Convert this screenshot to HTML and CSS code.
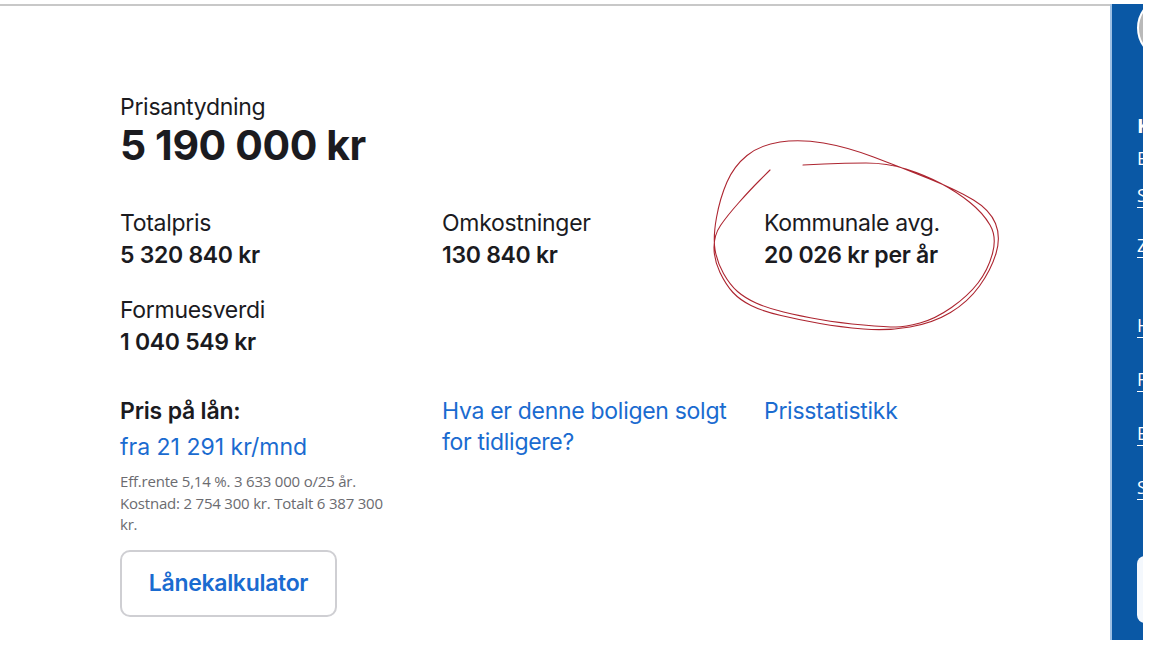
FILE: index.html
```html
<!DOCTYPE html>
<html lang="no">
<head>
  <meta charset="UTF-8" />
  <title>Prisantydning</title>
  <link rel="stylesheet" href="styles.css">
</head>
<body>
  <div class="page">
    <main class="main">
      <section class="price-box">
        <div class="price-label">Prisantydning</div>
        <div class="price-main">5 190 000 kr</div>

        <div class="facts">
          <div class="fact">
            <div class="fact-label">Totalpris</div>
            <div class="fact-value">5 320 840 kr</div>
          </div>
          <div class="fact">
            <div class="fact-label">Omkostninger</div>
            <div class="fact-value">130 840 kr</div>
          </div>
          <div class="fact marked">
            <div class="fact-label">Kommunale avg.</div>
            <div class="fact-value">20 026 kr per år</div>
            <!-- håndtegnet markering -->
            <svg class="scribble" viewBox="0 0 320 210" aria-hidden="true">
              <path d="M103 35 L124 34 Q145 33 166 33 Q187 33 206 39 Q225 45 241 53.5 Q257 62 270 72.5 Q283 83 290 95 Q297 107 292.5 123.5 Q288 140 278 153 Q268 166 251.5 177.5 Q235 189 220 193 Q205 197 196 197 Q187 197 163.5 195 Q140 193 120 189.5 Q100 186 83.5 182 Q67 178 56 173 Q45 168 37.5 161.5 Q30 155 23.5 143.5 Q17 132 15 119.5 Q13 107 16.5 87.5 Q20 68 27 52 Q34 36 47 25.5 Q60 15 80 12 Q100 9 123.5 13 Q147 17 173.5 27 Q200 37 228.5 48.5 Q257 60 273.5 70 Q290 80 295.5 93.5 Q301 107 296 123.5 Q291 140 279.5 156 Q268 172 250.5 182.5 Q233 193 210 197 Q187 201 163.5 199 Q140 197 120 193.5 Q100 190 81 185.5 Q62 181 51 175.5 Q40 170 33 162.5 Q26 155 20 142.5 Q14 130 14 117.5 Q14 105 20.5 95.5 Q27 86 38.5 73 Q50 60 60 50 L70 40" />
            </svg>
          </div>
          <div class="fact">
            <div class="fact-label">Formuesverdi</div>
            <div class="fact-value">1 040 549 kr</div>
          </div>
        </div>

        <div class="loan-row">
          <div class="loan">
            <div class="loan-title">Pris på lån:</div>
            <a class="link loan-amount" href="#">fra 21 291 kr/mnd</a>
            <p class="loan-note">Eff.rente 5,14 %. 3 633 000 o/25 år. Kostnad: 2 754 300 kr. Totalt 6 387 300 kr.</p>
            <button class="btn-outline" type="button">Lånekalkulator</button>
          </div>
          <div class="loan-link">
            <a class="link" href="#">Hva er denne boligen solgt for tidligere?</a>
          </div>
          <div class="loan-link">
            <a class="link" href="#">Prisstatistikk</a>
          </div>
        </div>
      </section>
    </main>

    <aside class="side">
      <div class="side-inner">
        <div class="avatar"></div>
        <div class="side-name">Kristine Megler</div>
        <div class="side-text">Eiendomsmegler</div>
        <a class="side-link first" href="#">Send e-post</a>
        <a class="side-link tight" href="#">Zoom-visning</a>
        <a class="side-link gap" href="#">Hjemmeside</a>
        <a class="side-link" href="#">Flere annonser</a>
        <a class="side-link" href="#">Bestill verdivurdering</a>
        <a class="side-link" href="#">Se salgsoppgave</a>
        <div class="side-card"></div>
      </div>
    </aside>
  </div>
</body>
</html>
```

FILE: styles.css
```css
body {
  margin: 0;
  background: #fff;
  font-family: Inter, "Noto Sans", sans-serif;
  color: #1b1b1f;
  overflow: hidden;
}

.page {
  display: flex;
  height: 648px;
}

.main {
  width: 1110px;
  margin-top: 4px;
  border-top: 2px solid #c8c8c8;
  box-sizing: border-box;
}

.price-box {
  padding: 86px 0 0 120px;
}

.price-label {
  font-size: 23px;
  line-height: 30px;
  letter-spacing: -0.3px;
}

.price-main {
  font-size: 41px;
  font-weight: 700;
  line-height: 46px;
  letter-spacing: -0.4px;
}

.facts {
  display: grid;
  grid-template-columns: repeat(3, 322px);
  row-gap: 24px;
  margin-top: 40px;
}

.fact-label {
  font-size: 23px;
  line-height: 31px;
  letter-spacing: -0.3px;
}

.fact-value {
  font-size: 23px;
  font-weight: 600;
  line-height: 32px;
  letter-spacing: -0.3px;
}

.marked {
  position: relative;
}

.scribble {
  position: absolute;
  left: -64px;
  top: -78px;
  width: 320px;
  height: 210px;
  fill: none;
  stroke: #ad2530;
  stroke-width: 1.1;
  stroke-linejoin: round;
  stroke-linecap: round;
  pointer-events: none;
}

.loan-row {
  display: grid;
  grid-template-columns: repeat(3, 322px);
  margin-top: 38px;
}

.loan-title {
  font-size: 23px;
  font-weight: 600;
  line-height: 30px;
  letter-spacing: -0.2px;
}

.link {
  color: #1a6bd0;
  text-decoration: none;
  font-size: 23px;
  line-height: 31px;
  letter-spacing: -0.3px;
}

.loan-amount {
  display: block;
  margin-top: 6px;
  letter-spacing: 0;
}

.loan-note {
  width: 278px;
  margin: 8px 0 0;
  font-size: 15px;
  line-height: 21.5px;
  color: #6b6b70;
  font-family: "Open Sans", sans-serif;
  letter-spacing: -0.2px;
}

.btn-outline {
  margin-top: 14px;
  width: 217px;
  height: 67px;
  background: #fff;
  border: 2px solid #cfcfd3;
  border-radius: 10px;
  font-family: Inter, sans-serif;
  font-size: 23px;
  font-weight: 600;
  letter-spacing: -0.3px;
  color: #1a6bd0;
  cursor: pointer;
}

.loan-link .link {
  display: block;
  width: 300px;
}

/* sidepanel, kuttet i kanten */
.side {
  width: 31px;
  margin-top: 4px;
  height: 636px;
  background: #0a58a5;
  border-left: 2px solid #9ec0e4;
  overflow: hidden;
}

.side-inner {
  width: 260px;
  padding-left: 25px;
  color: #fff;
  font-family: "Open Sans", sans-serif;
}

.avatar {
  width: 60px;
  height: 60px;
  margin-top: -8px;
  border-radius: 50%;
  background: #b9b9b9;
  border: 2px solid #fff;
}

.side-name {
  margin-top: 52px;
  font-size: 20px;
  font-weight: 700;
  line-height: 28px;
}

.side-text {
  margin-top: 5px;
  font-size: 18px;
  line-height: 26px;
}

.side-link {
  display: block;
  margin-top: 28px;
  font-size: 18px;
  line-height: 26px;
  color: #fff;
  text-decoration: underline;
  text-underline-offset: 5px;
}

.side-link.first {
  margin-top: 11px;
}

.side-link.tight {
  margin-top: 24px;
}

.side-link.gap {
  margin-top: 54px;
}

.side-card {
  margin-top: 56px;
  height: 67px;
  border-radius: 8px;
  background: #f4f8fd;
}
```
